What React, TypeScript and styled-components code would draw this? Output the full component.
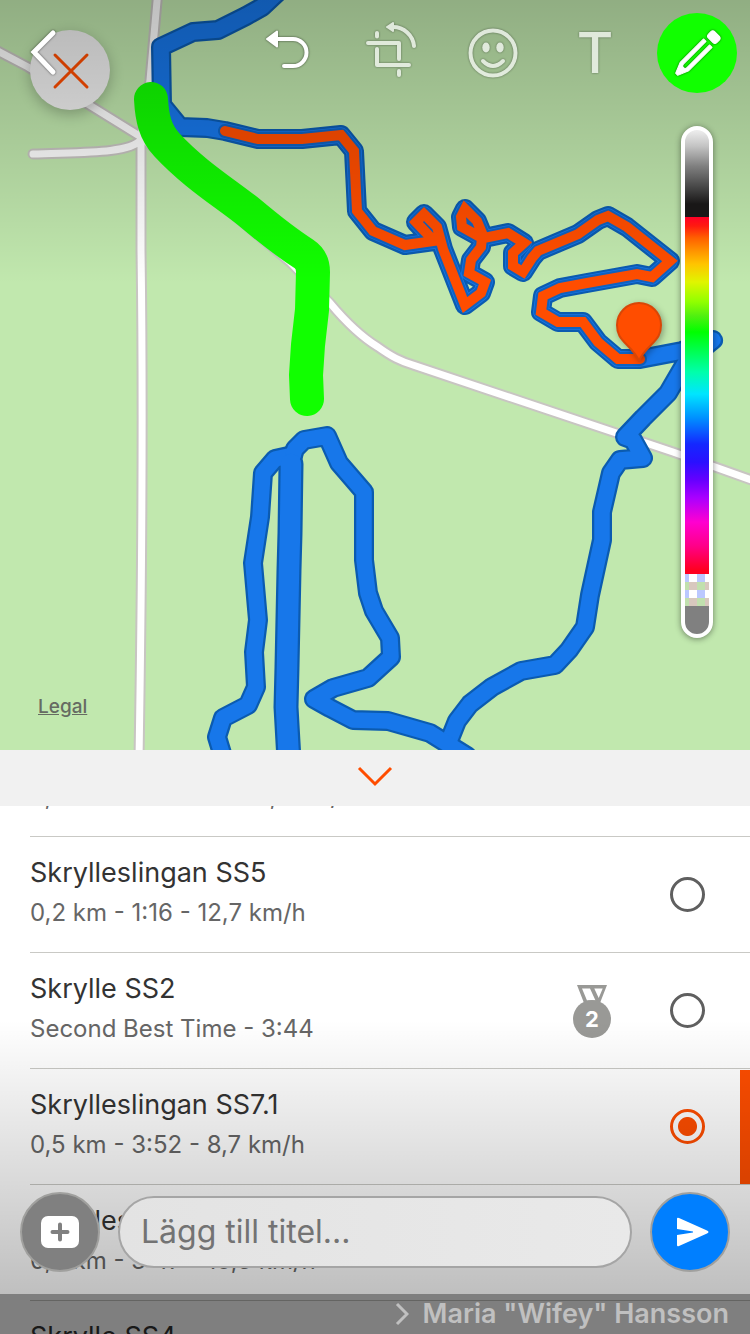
import React, { useState } from "react";
import styled, { createGlobalStyle } from "styled-components";

const orange = "#ff4d00";
const fontStack = '"Inter", "Liberation Sans", sans-serif';

const GlobalStyle = createGlobalStyle`
  *, *::before, *::after { box-sizing: border-box; }
  body {
    margin: 0;
    background: #ffffff;
    font-family: ${fontStack};
  }
  button, input { font-family: inherit; }
`;

const Screen = styled.main`
  position: relative;
  display: flex;
  flex-direction: column;
  height: 100vh;
  overflow: hidden;
`;

const MapPanel = styled.section`
  position: relative;
  flex: none;
  width: 100%;
  aspect-ratio: 1;
  background: #c1e8ae;
`;

const MapDrawing = styled.svg`
  display: block;
  width: 100%;
  height: 100%;
`;

const IconButton = styled.button`
  display: flex;
  align-items: center;
  justify-content: center;
  padding: 0;
  border: 0;
  background: none;
  color: inherit;
`;

const CloseButton = styled(IconButton)`
  position: absolute;
  top: 30px;
  left: 30px;
  width: 80px;
  height: 80px;
  border-radius: 50%;
  background: #f1f1f1;
  color: ${orange};
  box-shadow: 0 4px 14px rgba(0, 0, 0, 0.25);
`;

const LegalLink = styled.a`
  position: absolute;
  left: 38px;
  bottom: 30px;
  color: #666b62;
  font-size: 19px;
  font-weight: 500;
  line-height: 26px;
`;

const SheetHandle = styled(IconButton)`
  flex: none;
  width: 100%;
  height: 56px;
  padding-bottom: 4px;
  background: #f1f1f1;
  color: ${orange};
`;

const ListViewport = styled.section`
  flex: 1;
  min-height: 0;
  overflow: hidden;
`;

const SegmentList = styled.ul`
  margin: -85px 0 0;
  padding: 0 0 0 30px;
  list-style: none;
`;

const SegmentItem = styled.li`
  height: 116px;
  border-bottom: 1px solid #c9c9c5;
`;

const SegmentRow = styled.label`
  display: flex;
  align-items: center;
  height: 100%;
`;

const SegmentText = styled.span`
  display: flex;
  flex: 1;
  flex-direction: column;
  min-width: 0;
  padding-bottom: 4px;
  white-space: nowrap;
`;

const SegmentName = styled.span`
  color: #333333;
  font-size: 27px;
  line-height: 40px;
`;

const SegmentInfo = styled.span`
  color: #666666;
  font-size: 24px;
  line-height: 40px;
`;

const Medal = styled.svg`
  flex: none;
  width: 40px;
  height: 54px;
  margin-right: 58px;
`;

const Radio = styled.input`
  flex: none;
  width: 35px;
  height: 35px;
  margin: 0 45px 0 0;
  border: 3px solid #5f5f5f;
  border-radius: 50%;
  appearance: none;

  &:checked {
    border-color: ${orange};
    background: radial-gradient(circle, ${orange} 9px, transparent 10px);
  }
`;

const SelectedMark = styled.span`
  flex: none;
  align-self: stretch;
  width: 10px;
  margin: 1px 0 0 -10px;
  background: ${orange};
`;

const TopShade = styled.div`
  position: absolute;
  inset: 0 0 auto;
  height: 284px;
  background: linear-gradient(rgba(0, 0, 0, 0.25), rgba(0, 0, 0, 0));
  pointer-events: none;
`;

const EditorTop = styled.div`
  position: absolute;
  inset: 0 0 auto;
  display: flex;
  flex-direction: column;
  align-items: flex-end;
  gap: 33px;
  pointer-events: none;

  & > * { pointer-events: auto; }
`;

const Toolbar = styled.header`
  display: flex;
  align-items: center;
  justify-content: space-between;
  width: 100%;
  padding: 13px 13px 0;
  color: #ffffff;
`;

const Tools = styled.nav`
  display: flex;
  gap: 22px;
`;

const ToolButton = styled(IconButton)<{ $muted?: boolean; $active?: boolean; $narrow?: boolean }>`
  width: ${(p) => (p.$narrow ? 60 : 80)}px;
  height: 80px;
  border-radius: 50%;
  background: ${(p) => (p.$active ? "#11ff00" : "none")};

  & > * {
    opacity: ${(p) => (p.$muted ? 0.7 : 1)};
    filter: drop-shadow(0 0 1px rgba(0, 0, 0, 0.35)) drop-shadow(0 0 1px rgba(0, 0, 0, 0.25));
  }
`;

const TextToolLetter = styled.span`
  font-size: 56px;
  font-weight: 500;
  line-height: 80px;
`;

const ColorSlider = styled.input`
  width: 32px;
  height: 512px;
  margin: 0 37px 0 0;
  border: 4px solid #ffffff;
  border-radius: 16px;
  appearance: none;
  writing-mode: vertical-lr;
  box-shadow: 0 1px 6px rgba(0, 0, 0, 0.45);
  background-repeat: no-repeat;
  background-image:
    linear-gradient(90deg, #bbc8ff 4px, #ffffff 4px 12px, #bbc8ff 12px 20px, #ffffff 20px),
    linear-gradient(90deg, #bbc8ff 4px, #ffffff 4px 12px, #bbc8ff 12px 20px, #ffffff 20px),
    linear-gradient(90deg, #c1e0ae 4px, #d8c8be 4px 12px, #c1e0ae 12px 20px, #d8c8be 20px),
    linear-gradient(90deg, #c1e0ae 4px, #d8c8be 4px 12px, #c1e0ae 12px 20px, #d8c8be 20px),
    linear-gradient(
      #eeeeee 0, #c4c4c4 16px, #808080 36px, #444444 58px, #191717 74px, #191717 87px,
      #ff0026 87px, #ff1a10 96px, #ff6000 108px, #ff9000 120px, #ffc400 134px, #e0f500 152px,
      #90ff00 172px, #50f010 186px, #00ff00 202px, #00ff55 222px, #00ffaa 242px, #00e5ff 264px,
      #0090ff 288px, #1428ff 314px, #2a10ff 332px, #6600ff 350px, #aa00ff 368px, #ff00d0 392px,
      #ff0088 416px, #ff0020 440px, #ff0020 444px, #808080 444px
    );
  background-size: 24px 8px, 24px 8px, 24px 8px, 24px 8px, 24px 504px;
  background-position: 0 444px, 0 460px, 0 452px, 0 468px, 0 0;

  &::-webkit-slider-thumb {
    width: 24px;
    height: 24px;
    appearance: none;
    background: transparent;
  }
`;

const EditorBottom = styled.div`
  position: absolute;
  inset: auto 0 0;
`;

const Composer = styled.form`
  display: flex;
  align-items: center;
  gap: 18px;
  padding: 172px 20px 22px;
  background: linear-gradient(rgba(0, 0, 0, 0), rgba(0, 0, 0, 0.25));
`;

const RoundButton = styled(IconButton)<{ $fill: string }>`
  flex: none;
  width: 80px;
  height: 80px;
  border: 2px solid #a0a09e;
  border-radius: 50%;
  background: ${(p) => p.$fill};
  color: #ffffff;
`;

const TitleInput = styled.input`
  flex: 1;
  min-width: 0;
  height: 72px;
  padding: 0 21px 2px;
  border: 2px solid #a5a5a5;
  border-radius: 36px;
  background: linear-gradient(90deg, #e3e3e3, #e9e9e9);
  color: #333333;
  font-size: 32px;

  &::placeholder { color: #737373; opacity: 1; }
`;

const Recipient = styled.footer`
  display: flex;
  align-items: center;
  justify-content: flex-end;
  gap: 14px;
  height: 40px;
  padding: 0 21px;
  background: rgba(0, 0, 0, 0.5);
  color: #c0c0c0;
  font-size: 27px;
  font-weight: 600;
  line-height: 40px;
`;

const roads = [
  "M158 -10L150 80L141 137L141 250Q144 450 139 760",
  "M-10 47L28 67L141 137",
  "M141 140C128 154 80 152 33 154",
  "M141 137L290 262L330 303Q355 333 378 347C392 357 400 361 413 365L673 452L760 483",
];

const trails = [
  "M278 -8L262 7L246 16L218 30L193 32L161 47L162 105L180 127L207 128L225 131L258 139L302 139L341 135L354 151L357 211L373 231L405 245L434 241L416 222L424 214L437 227L443 249L465 305L481 293L485 282L469 273L471 260L481 247L482 238L462 227L461 217L465 209L477 221L484 238L508 233L524 243L513 253L513 266L523 272L532 258L538 251L578 234L598 220L608 216L627 227L670 261L652 277L637 274L587 283L560 288L543 296L541 312L558 322L583 322L598 342L618 359L640 359L682 351L713 340L686 362L668 393L643 418L625 437L633 440L643 458L620 460L611 473L602 512L602 540L590 595L585 627L569 650L555 665L521 671L492 687L470 704L457 721L449 741",
  "M293 455L275 459L263 473L260 517L253 563L258 620L254 652L256 687L248 705L223 718L217 737L224 760",
  "M291 462L295 449L304 440L327 436L339 463L364 492L364 560L368 593L374 611L390 638L391 657L368 678L333 688L314 699L330 708L353 720L388 721L430 733L467 756",
];

const doubleTrail = "M291 464L290 533L289 570L287 667L286 707L289 760";

const riddenSegment =
  "M225 131L258 139L302 139L341 135L354 151L357 211L373 231L405 245L434 241L416 222L424 214L437 227L443 249L465 305L481 293L485 282L469 273L471 260L481 247L482 238L462 227L461 217L465 209L477 221L484 238L508 233L524 243L513 253L513 266L523 272L532 258L538 251L578 234L598 220L608 216L627 227L670 261L652 277L637 274L587 283L560 288L543 296L541 312L558 322L583 322L598 342L618 359L640 359";

const freehand =
  "M151 99C152 118 155 132 167 145C195 175 225 193 250 213C275 234 290 245 304 254Q313 260 313 272L312 310L308 345L306 375L307 399";

function RouteMap() {
  return (
    <MapDrawing
      viewBox="0 0 750 750"
      fill="none"
      strokeLinecap="round"
      strokeLinejoin="round"
      role="img"
      aria-label="Route map"
    >
      <g stroke="#c8c5c2" strokeWidth="11">
        {roads.map((d) => <path key={d} d={d} />)}
      </g>
      <g stroke="#ffffff" strokeWidth="7">
        {roads.map((d) => <path key={d} d={d} />)}
      </g>
      <g stroke="#0b5bb0" strokeWidth="20">
        {trails.map((d) => <path key={d} d={d} />)}
        <path d={doubleTrail} strokeWidth="25" />
      </g>
      <g stroke="#1777ea" strokeWidth="15.5">
        {trails.map((d) => <path key={d} d={d} />)}
        <path d={doubleTrail} strokeWidth="20.5" />
      </g>
      <path d={riddenSegment} stroke="#0f62c0" strokeWidth="14" />
      <path d={riddenSegment} stroke={orange} strokeWidth="10" strokeLinejoin="miter" />
      <path
        d="M639 361C637 355 633 351 627 345C620 338 617 334 617 325A22 22 0 1 1 661 325C661 334 658 338 651 345C645 351 641 355 639 361Z"
        fill={orange}
        stroke="#d94606"
        strokeWidth="2"
        style={{ filter: "drop-shadow(2px 2px 3px rgba(0,0,0,.3))" }}
      />
      <path d={freehand} stroke="#11ff00" strokeWidth="34" />
    </MapDrawing>
  );
}

const ToolIcon = ({ children }: { children: React.ReactNode }) => (
  <svg
    width="80"
    height="80"
    viewBox="0 0 80 80"
    fill="none"
    stroke="currentColor"
    strokeWidth="4"
    strokeLinecap="round"
    strokeLinejoin="round"
    aria-hidden="true"
  >
    {children}
  </svg>
);

const MedalIcon = ({ place }: { place: number }) => (
  <Medal viewBox="0 0 40 54" role="img" aria-label={`Place ${place}`}>
    <path
      fillRule="evenodd"
      fill="#999996"
      d="M5 1H35L28 19H12ZM10 4.500H18L23.500 16.500H15ZM22.300 4.500H30.700L26.700 14Z"
    />
    <circle cx="20" cy="35" r="19" fill="#999996" />
    <text x="20" y="43" textAnchor="middle" fill="#ffffff" fontSize="22" fontWeight="700" fontFamily={fontStack}>
      {place}
    </text>
  </Medal>
);

type Segment = { name: string; info: string; place?: number };

const segments: Segment[] = [
  { name: "Skrylleslingan SS6", info: "0,9 km - 2:03:46 - 12,7 km/h" },
  { name: "Skrylleslingan SS5", info: "0,2 km - 1:16 - 12,7 km/h" },
  { name: "Skrylle SS2", info: "Second Best Time - 3:44", place: 2 },
  { name: "Skrylleslingan SS7.1", info: "0,5 km - 3:52 - 8,7 km/h" },
  { name: "Skrylleslingan SS3", info: "0,6 km - 3:47 - 10,3 km/h" },
  { name: "Skrylle SS4", info: "0,4 km - 1:58 - 12,2 km/h" },
];

export default function App() {
  const [selected, setSelected] = useState(3);
  const [title, setTitle] = useState("");
  const [hue, setHue] = useState(40);

  return (
    <Screen>
      <GlobalStyle />
      <MapPanel>
        <RouteMap />
        <CloseButton type="button" aria-label="Close map">
          <svg width="40" height="40" viewBox="0 0 40 40" stroke="currentColor" strokeWidth="3" strokeLinecap="round">
            <path d="M5 5L37 37M37 5L5 37" />
          </svg>
        </CloseButton>
        <LegalLink href="#legal">Legal</LegalLink>
      </MapPanel>

      <SheetHandle type="button" aria-label="Collapse list">
        <svg width="36" height="24" viewBox="0 0 36 24" fill="none" stroke="currentColor" strokeWidth="3">
          <path d="M2 4L18 20L34 4" />
        </svg>
      </SheetHandle>

      <ListViewport>
        <SegmentList>
          {segments.map((segment, index) => (
            <SegmentItem key={segment.name}>
              <SegmentRow>
                <SegmentText>
                  <SegmentName>{segment.name}</SegmentName>
                  <SegmentInfo>{segment.info}</SegmentInfo>
                </SegmentText>
                {segment.place && <MedalIcon place={segment.place} />}
                <Radio
                  type="radio"
                  name="segment"
                  checked={selected === index}
                  onChange={() => setSelected(index)}
                />
                {selected === index && <SelectedMark />}
              </SegmentRow>
            </SegmentItem>
          ))}
        </SegmentList>
      </ListViewport>

      <TopShade />
      <EditorTop>
        <Toolbar>
          <ToolButton type="button" aria-label="Back" $narrow>
            <svg width="60" height="80" viewBox="0 0 60 80" fill="none" stroke="currentColor" strokeWidth="5" strokeLinecap="round">
              <path d="M40 20L21 39L40 59" />
            </svg>
          </ToolButton>
          <Tools>
            <ToolButton type="button" aria-label="Undo">
              <ToolIcon>
                <path d="M28 26H44a13.500 13.500 0 0 1 0 27H35" />
                <path d="M18 26L28 18.500V33.500Z" fill="currentColor" strokeWidth="2" />
              </ToolIcon>
            </ToolButton>
            <ToolButton type="button" aria-label="Crop and rotate" $muted>
              <ToolIcon>
                <path d="M26 20V23.500M17 30H48V46M26 36V52H58M48 58V62M42 14A21 21 0 0 1 63 33" />
                <path d="M36 14L42 10V18Z" fill="currentColor" strokeWidth="2" />
              </ToolIcon>
            </ToolButton>
            <ToolButton type="button" aria-label="Stickers" $muted>
              <ToolIcon>
                <circle cx="40" cy="40" r="22.500" />
                <path d="M30 48Q40 58 50 48" />
                <ellipse cx="33" cy="34.500" rx="3.700" ry="5" fill="currentColor" stroke="none" />
                <ellipse cx="47" cy="34.500" rx="3.700" ry="5" fill="currentColor" stroke="none" />
              </ToolIcon>
            </ToolButton>
            <ToolButton type="button" aria-label="Text" $muted>
              <TextToolLetter>T</TextToolLetter>
            </ToolButton>
            <ToolButton type="button" aria-label="Draw" $active>
              <ToolIcon>
                <g transform="translate(19 62) rotate(-45)" fill="currentColor" strokeWidth="1">
                  <path d="M1 -1.500L12 -6H45V-2.500H13a2.500 2.500 0 0 0 0 5H45V6H12L1 1.500Z" />
                  <rect x="49" y="-6" width="9" height="12" rx="3" />
                </g>
              </ToolIcon>
            </ToolButton>
          </Tools>
        </Toolbar>
        <ColorSlider
          type="range"
          aria-label="Brush colour"
          value={hue}
          onChange={(e) => setHue(Number(e.target.value))}
        />
      </EditorTop>

      <EditorBottom>
        <Composer onSubmit={(e) => e.preventDefault()}>
          <RoundButton type="button" aria-label="Add media" $fill="#808080">
            <svg width="40" height="34" viewBox="0 0 40 34">
              <rect x="1" y="1" width="38" height="32" rx="7" fill="currentColor" />
              <path d="M20 9.500V24.500M12.500 17H27.500" stroke="#808080" strokeWidth="4" strokeLinecap="round" />
            </svg>
          </RoundButton>
          <TitleInput
            aria-label="Titel"
            placeholder="Lägg till titel..."
            value={title}
            onChange={(e) => setTitle(e.target.value)}
          />
          <RoundButton type="submit" aria-label="Send" $fill="#007fff">
            <svg width="38" height="32" viewBox="0 0 38 32">
              <path d="M6 3Q6 1 8 2L36 14.500Q39 16 36 17.500L8 30Q6 31 6 29V19L22 16.500V15.500L6 13Z" fill="currentColor" />
            </svg>
          </RoundButton>
        </Composer>
        <Recipient>
          <svg width="14" height="24" viewBox="0 0 14 24" fill="none" stroke="currentColor" strokeWidth="3">
            <path d="M2 2L12 12L2 22" />
          </svg>
          <span>Maria "Wifey" Hansson</span>
        </Recipient>
      </EditorBottom>
    </Screen>
  );
}
